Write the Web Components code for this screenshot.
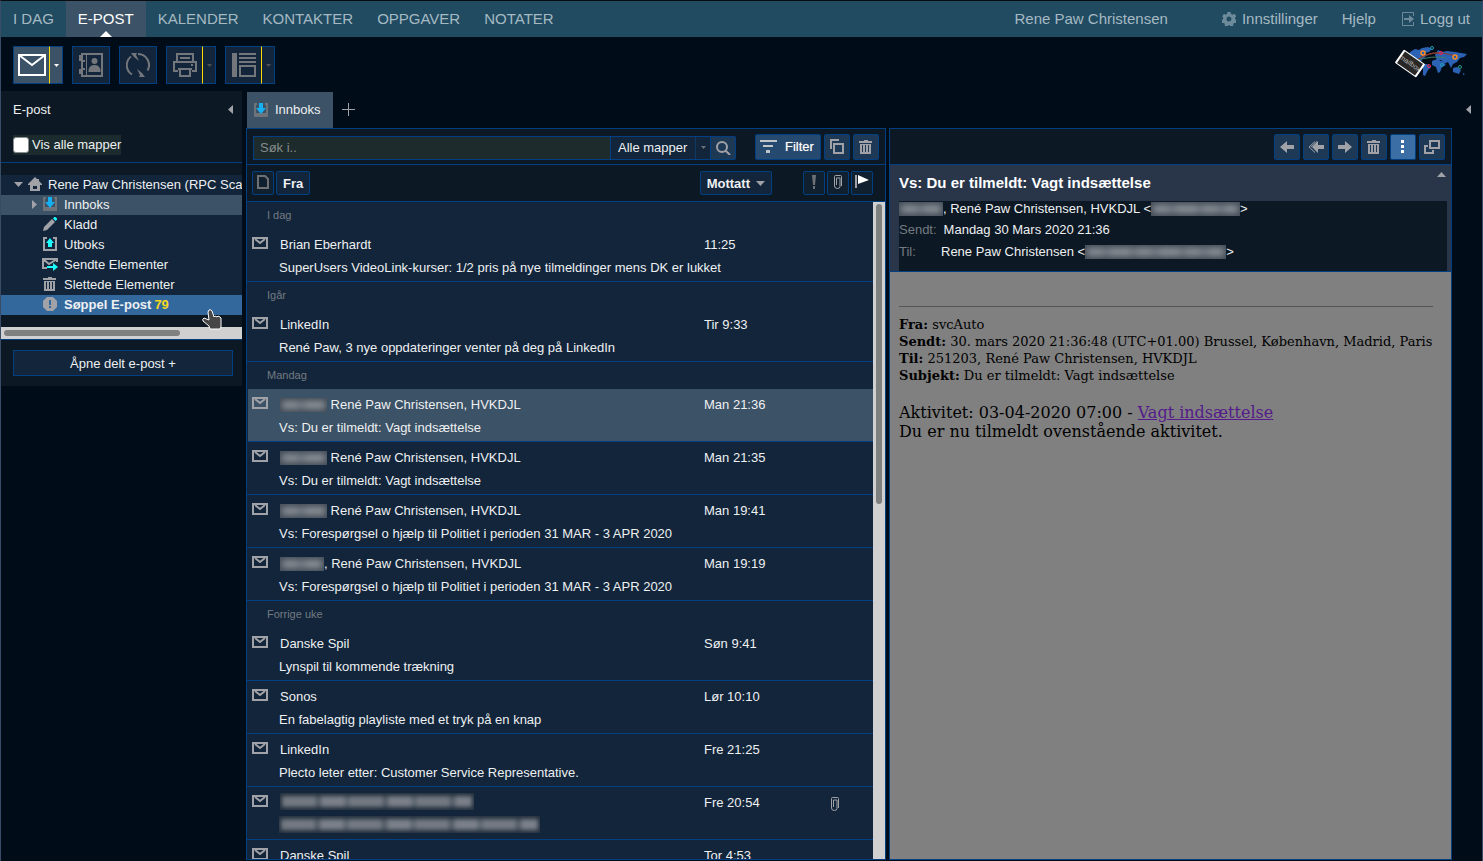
<!DOCTYPE html>
<html lang="nb">
<head>
<meta charset="utf-8">
<title>E-post – Innboks</title>
<style>
html, body { margin: 0; height: 100%; }
body {
  --line: #003f82; --panel: #0c1823; --row: #12253a; --sel: #3c5266; --btn: #1e3956;
  --ink: #eef0f2; --muted: #747b82; --icon: #a0a2a7;
  background: #000c18; color: var(--ink); overflow: hidden;
  font: 13px/20px "Liberation Sans", Arial, sans-serif;
}
</style>
</head>
<body>
<mail-app></mail-app>

<script>
const BASE = `
  *, *::before, *::after { box-sizing: border-box; }
  button, input, select { font: inherit; color: inherit; margin: 0; padding: 0; border: 0; background: none; border-radius: 0; outline: 0; }
  a { color: inherit; text-decoration: none; }
`;
function define(name, css, html) {
  const tpl = document.createElement('template');
  customElements.define(name, class extends HTMLElement {
    constructor() {
      super();
      this.attachShadow({ mode: 'open' });
    }
    connectedCallback() {
      if (this.shadowRoot.childNodes.length) return;
      tpl.innerHTML = `<style>${BASE}${css}</style>` + (typeof html === 'function' ? html(this) : html);
      this.shadowRoot.append(tpl.content.cloneNode(true));
    }
  });
}

/* Each icon: [width, height, markup]; shapes use currentColor. */
const S = (w, d, extra = '') => `<path fill="none" stroke="currentColor" stroke-width="${w}" d="${d}" ${extra}/>`;
const F = (d, extra = '') => `<path fill="currentColor" d="${d}" ${extra}/>`;
const ICONS = {
  compose: [28, 22, S(2, 'M1 1h26v20H1z M1 1l13 10L27 1')],
  contacts: [24, 24, F('M2 0h4v2H4v5h2v2H4v6h2v2H4v5h2v2H2v-3H0v-5h2V8H0V2h2z') +
    S(2, 'M6 1h17v22H6') + S(1, 'M7.500 1v22') + F('M15.500 5a3 3 0 1 1 0 6 3 3 0 0 1 0-6z M9.500 19v-2q1-5 6-5t6 5v2z')],
  sync: [24, 24, S(2, 'M6 21.500A11 11 0 0 1 5 3.500 M12 1A11 11 0 0 1 21.500 17.500') + F('M5 0h6l-1 2 3 6-5-4z M19 24h-6l1-2-3-6 5 4z')],
  print: [24, 24, S(2, 'M4 9V1h16v8 M5 18H1V9h22v9h-4 M7 17v6h10v-6') + F('M7 4h10v2H7z M5 15h14v2H5z M18 11h2v2h-2z')],
  layout: [24, 24, F('M0 0h5v24H0z M7 0h17v2H7z M7 4h17v2H7z M7 8h17v2H7z') + S(2, 'M8 13h15v10H8z')],
  caret: [5, 3, F('M0 0h5L2.500 3z')],
  down: [9, 5, F('M0 0h9L4.500 5z')],
  up: [9, 5, F('M0 5h9L4.500 0z')],
  right: [5, 9, F('M0 0v9l5-4.500z')],
  left: [5, 9, F('M5 0v9L0 4.500z')],
  plus: [13, 13, S(1, 'M6.500 0v13M0 6.500h13')],
  gear: [14, 14, F('M5.500 0h3l.5 2 1.500.700 1.800-1 2 2.500-1.300 1.600.2 1.400 1.800 1-.7 2.800-2.200-.1-1 1.100.3 2-2.600 1-1-1.800H6.200l-1 1.800-2.600-1 .3-2-1-1.100-1.900.1-.7-2.800 1.800-1 .1-1.400L.300 4.200l1.700-2.500 1.800 1L5 2z M7 4.500a2.500 2.500 0 1 0 0 5 2.500 2.500 0 0 0 0-5z', 'fill-rule="evenodd"')],
  logout: [12, 14, S(1, 'M11.500 4V.500H.500v13h11V10') + F('M2 6h5V3l5 4-5 4V8H2z')],
  inbox: [14, 14, `<path fill="#6d7379" d="M0 0h3v2H2v8h10V2h-1V0h3v14H0z"/><path fill="#16b0f2" d="M5 0h4v5h3l-5 6-5-6h3z"/>`],
  outbox: [14, 14, `<path fill="#a0a2a7" d="M0 0h4v2H2v10h10V2h-2V0h4v14H0z"/><path fill="#1cfbff" d="M5 10h4V6h2L7 1 3 6h2z"/>`],
  pencil: [14, 14, F('M0 14l1-4 8-8 3 3-8 8z') + `<path fill="#1cfbff" d="M10 1.500L11.500 0h1L14 1.500v1L12.500 4z"/>`],
  sent: [16, 13, S(2, 'M5 10H1V1h14v3 M1 1l6 5 8-5') + `<path fill="#1cfbff" d="M5 8h6V5l5 4-5 4v-3H5z"/>`],
  trash: [14, 14, F('M5 0h4v1h4v2H0V1h5z M1 4h11v10H1z M3 5v7h1V5z M6 5v7h1V5z M9 5v7h1V5z', 'fill-rule="evenodd"')],
  junk: [14, 14, F('M4 0h6l4 4v6l-4 4H4l-4-4V4z M6 3v5h2V3z M6 9v2h2V9z', 'fill-rule="evenodd"')],
  home: [14, 14, F('M7 0l2 2h2v2l3 3v1h-2v6H2V8H0V7z M5 9v3h4V9z', 'fill-rule="evenodd"')],
  mail: [16, 12, S(2, 'M1 1h14v10H1z') + S(2, 'M3 2l5 4 5-4')],
  file: [12, 14, S(2, 'M1 1h7l3 3v9H1z')],
  search: [15, 14, S(2, 'M6 1a5 5 0 1 1 0 10A5 5 0 0 1 6 1z M9.500 9.500L14 14')],
  filter: [17, 13, F('M0 0h17v2H0z M3 5h10v2H3z M6 10h4v3H6z')],
  copy: [14, 15, S(2, 'M9 1H1v9 M4 5h9v9H4z')],
  bang: [4, 14, F('M0 0h4l-1 10H1z M1 11h2v3H1z')],
  clip: [8, 14, S(1, 'M7.500 11V1.500q0-1-1-1h-5q-1 0-1 1V11q0 2.500 3 2.500 2.500 0 2.500-2V3H2.500v7')],
  flag: [14, 14, F('M0 0h2v13H0z') + `<path fill="#fff" d="M3 0l11 5-11 4z"/>`],
  back: [14, 12, F('M0 6l7-6v4h7v4H7v4z')],
  backall: [16, 12, F('M4 6l6-6v4h6v4h-6v4z') + S(1, 'M7 .500L1 6l6 5.500 M9 .500L3 6')],
  forward: [14, 12, F('M14 6L7 0v4H0v4h7v4z')],
  dots: [4, 14, `<path fill="#fff" d="M0 0h3v3H0zM0 5h3v3H0zM0 10h3v3H0z"/>`],
  popout: [16, 14, S(2, 'M6 1h9v7H6z M4 6H1v7h8v-3')],
};
define('ui-icon', `:host { display: inline-flex; flex: none; } svg { display: block; }`, el => {
  const [w, h, body] = ICONS[el.getAttribute('name')];
  return `<svg width="${w}" height="${h}" viewBox="0 0 ${w} ${h}" aria-hidden="true">${body}</svg>`;
});

/* A blurred-out piece of private text, sized with --w. */
define('private-text', `
  :host { display: inline-block; width: var(--w, 47px); height: 14px; vertical-align: -3px; overflow: hidden; background: #424c57; }
  i { display: block; height: 8px; margin: 3px 2px; filter: blur(3px);
      background: repeating-linear-gradient(90deg, #8a8f96 0 16px, #747b84 16px 23px, #8d9298 23px 44px, #6f7780 44px 49px); }
  :host([bare]) { background: #222f3d; height: 17px; }
  :host([bare]) i { height: 11px; filter: blur(2px); background: repeating-linear-gradient(90deg, #737982 0 34px, #4f5965 34px 39px, #7b8089 39px 63px, #57616d 63px 67px); }
`, `<i></i>`);

define('split-button', `
  :host { display: flex; color: #73777c; }
  button { display: flex; align-items: center; justify-content: center; height: 38px; width: 38px; background: var(--row); border: 1px solid var(--line); }
  .menu { display: none; border-left: 0; }
  :host([menu]) .main { border-right: 1px solid #ffd800; width: 37px; }
  :host([menu]) .menu { display: flex; width: 13px; color: #4e5154; }
  :host([primary]), :host([primary]) .menu { color: #fff; }
  :host([primary]) button { background-color: var(--sel); }
`, el => `<button class="main" aria-label="${el.getAttribute('label')}"><ui-icon name="${el.getAttribute('icon')}"></ui-icon></button>
<button class="menu" aria-label="${el.getAttribute('label')}, meny"><ui-icon name="caret"></ui-icon></button>`);

define('icon-button', `
  :host { display: block; color: var(--icon); }
  button { display: flex; align-items: center; justify-content: center; width: 26px; height: 26px; background: var(--btn); border: 1px solid var(--line); border-radius: 2px; }
  :host([small]) button { width: 22px; height: 24px; padding-bottom: 2px; background: #10202f; }
  :host([dim]) { color: #6d7176; }
  :host([active]) button { background: #3a6ea5; }
`, el => `<button aria-label="${el.getAttribute('label')}"><ui-icon name="${el.getAttribute('icon')}"></ui-icon></button>`);

define('top-bar', `
  :host { display: flex; justify-content: space-between; height: 36px; background: #204b61; color: #a6b9c3; font-size: 15px; line-height: 36px; }
  nav { display: flex; }
  a { padding: 0 12px; display: flex; align-items: center; gap: 6px; position: relative; white-space: nowrap; }
  a[aria-current] { background: var(--sel); color: #fff; }
  a[aria-current]::after { content: ""; position: absolute; left: 50%; bottom: 0; margin-left: -6px; border: 6px solid transparent; border-top: 0; border-bottom-color: #fff; }
  ui-icon { color: #6d8b9b; }
  .user { margin-right: 42px; }
  .out { padding-left: 14px; }
`, `<nav aria-label="Hovedmeny"><a href="#">I DAG</a><a href="#" aria-current="page">E-POST</a><a href="#">KALENDER</a><a href="#">KONTAKTER</a><a href="#">OPPGAVER</a><a href="#">NOTATER</a></nav>
<nav aria-label="Konto"><span class="user">Rene Paw Christensen</span><a href="#"><ui-icon name="gear"></ui-icon>Innstillinger</a><a href="#">Hjelp</a><a href="#" class="out"><ui-icon name="logout"></ui-icon>Logg ut</a></nav>`);

define('brand-logo', `:host { display: block; } svg { display: block; }
  text { font: 7px "Liberation Sans", sans-serif; }`, `
<svg width="74" height="34" viewBox="0 0 74 34" role="img" aria-label="mailbox">
  <g fill="#2b62b4">
    <path d="M16 6l5-3 4 1 3-2 6-1 4 2-3 3-4 1 2 2-3 3-2 1-1 4-4 1-8-7z"/>
    <path d="M29 18l4 0 4 3-3 3-3 6-2-1z"/>
    <path d="M41 9l3-5 4 2 5-1 8 1 12 2-3 3-4 1-3 4-4 2-2 4-3-6-4 2-3-4-4 0z"/>
    <path d="M38 15l5-2 6 3 3 3-4 2-2 5-2 1-2-6-4-2z"/>
    <path d="M59 22l4-1 4 3-2 4-6-2z M69 27l2 1-2 1z"/>
  </g>
  <path d="M21 15Q38 2 62 10M21 15q15-10 25-8" fill="none" stroke="#8b3b2d"/>
  <path d="M21 15Q38 9 52 12" fill="none" stroke="#3b7f62"/>
  <g fill="none" stroke-width="1">
    <circle cx="29" cy="7" r="2" stroke="#ff8b20" stroke-width="1.500"/><circle cx="61" cy="11" r="2" stroke="#ff8b20" stroke-width="1.500"/>
    <circle cx="47" cy="7" r="1.500" stroke="#f02858"/><circle cx="35" cy="20" r="1.500" stroke="#f02858"/>
    <circle cx="38" cy="2" r="1.500" stroke="#1f9fb6"/><circle cx="48" cy="19" r="1.500" stroke="#1f9fb6"/><circle cx="66" cy="21" r="1.500" stroke="#299b87"/>
  </g>
  <g transform="translate(16 17.500) rotate(35)">
    <rect x="-13" y="-8" width="26" height="16" rx="1" fill="#fff"/>
    <rect x="-11" y="-7" width="22" height="14" fill="#292726"/>
    <text x="0" y="2" text-anchor="middle" fill="#bbb">mailbox</text>
  </g>
</svg>`);

define('tool-bar', `
  :host { display: flex; align-items: flex-start; gap: 9px; height: 54px; padding: 9px 14px 0 12px; }
  brand-logo { margin-left: auto; }
`, `<split-button icon="compose" label="Ny e-post" menu primary></split-button><split-button icon="contacts" label="Kontakter"></split-button><split-button icon="sync" label="Oppdater"></split-button><split-button icon="print" label="Skriv ut" menu></split-button><split-button icon="layout" label="Visning" menu></split-button><brand-logo></brand-logo>`);

define('folder-row', `
  :host { display: block; }
  a { display: flex; align-items: center; height: 20px; padding-left: 42px; background: var(--row); white-space: nowrap; overflow: hidden; color: var(--icon); line-height: 22px; }
  :host([root]) a { padding-left: 13px; }
  :host([open]) a { padding-left: 31px; background: var(--sel); }
  :host([hot]) a { background: #33689d; font-weight: bold; }
  .toggle { margin-right: 4px; padding-bottom: 2px; }
  :host([open]) .toggle { margin-right: 6px; }
  .ico { width: 16px; height: 20px; padding-bottom: 2px; margin-right: 6px; margin-left: -1px; display: flex; align-items: center; justify-content: center; flex: none; }
  :host([root]) .ico { margin-left: 0; margin-right: 5px; }
  .name { color: var(--ink); }
  b { color: #f7d81e; margin-left: 3px; }
`, el => {
  const t = el.hasAttribute('root') ? 'down' : el.hasAttribute('open') ? 'right' : '';
  const c = el.getAttribute('count');
  return `<a href="#">${t ? `<ui-icon class="toggle" name="${t}"></ui-icon>` : ''}<span class="ico"><ui-icon name="${el.getAttribute('icon')}"></ui-icon></span><span class="name"><slot></slot></span>${c ? `<b>${c}</b>` : ''}</a>`;
});

define('folder-panel', `
  :host { display: block; position: relative; align-self: start; background: var(--panel); }
  header { display: flex; align-items: center; justify-content: space-between; height: 37px; padding: 0 9px 0 12px; color: var(--icon); }
  h2 { margin: 0; font: inherit; color: var(--ink); }
  .all { height: 35px; padding: 7px 12px; border-bottom: 1px solid var(--line); }
  label { display: inline-flex; align-items: center; gap: 3px; height: 20px; line-height: 22px; background: #1c2b2d; }
  input { appearance: none; width: 16px; height: 16px; background: #fff; border: 1px solid #8b8f92; border-radius: 3px; }
  .tree { margin: 12px 0; }
  .bar { height: 12px; background: #d0d0d0; padding: 3px; }
  .bar i { display: block; width: 75%; height: 6px; border-radius: 3px; background: #7e8080; }
  .foot { border-top: 1px solid var(--line); padding: 10px 9px 10px 12px; }
  .foot button { display: block; width: 100%; height: 26px; padding-top: 1px; background: var(--row); border: 1px solid var(--line); }
  .pointer { position: absolute; left: 201px; top: 218px; }
`, `<header><h2>E-post</h2><ui-icon name="left"></ui-icon></header>
<div class="all"><label><input type="checkbox">Vis alle mapper</label></div>
<div class="tree" role="group" aria-label="Mapper">
  <folder-row icon="home" root>Rene Paw Christensen (RPC Sca</folder-row>
  <folder-row icon="inbox" open>Innboks</folder-row>
  <folder-row icon="pencil">Kladd</folder-row>
  <folder-row icon="outbox">Utboks</folder-row>
  <folder-row icon="sent">Sendte Elementer</folder-row>
  <folder-row icon="trash">Slettede Elementer</folder-row>
  <folder-row icon="junk" hot count="79">Søppel E-post</folder-row>
</div>
<div class="bar"><i></i></div>
<div class="foot"><button>Åpne delt e-post +</button></div>
<svg class="pointer" width="20" height="21" viewBox="0 0 20 21" aria-hidden="true"><path d="M7 1q2-1 3 1l2 6 1-1 2 1 1-1 2 1 1 1v9l-1 2H8l-1-3-6-5q-1-2 1-3l5 2-1-8z" fill="#464646" stroke="#fff"/></svg>`);

define('mail-group', `
  :host { display: block; }
  h3 { margin: 0; height: 27px; padding-left: 20px; font-size: 11px; font-weight: normal; line-height: 27px; color: var(--muted); }
`, el => `<h3>${el.getAttribute('name')}</h3><slot></slot>`);

define('mail-row', `
  :host { display: grid; grid-template-columns: 27px minmax(0, 1fr) 127px 42px; align-content: start; height: 53px; padding: 4px 0 0 5px; border-bottom: 1px solid var(--line); line-height: 23px; white-space: nowrap; color: var(--ink); }
  :host([selected]) { background: var(--sel); margin-left: 1px; padding-left: 4px; }
  .ico, .clip { color: var(--icon); padding-top: 4px; height: 23px; }
  .from { padding-left: 1px; }
  .subject { grid-column: 2 / -1; }
`, el => `<ui-icon class="ico" name="mail"></ui-icon>
<span class="from"><slot></slot></span><time>${el.getAttribute('time')}</time>
<span class="clip">${el.hasAttribute('clip') ? '<ui-icon name="clip"></ui-icon>' : ''}</span>
<span class="subject"><slot name="subject">${el.getAttribute('subject') || ''}</slot></span>`);

define('mail-list', `
  :host { display: flex; flex-direction: column; min-height: 0; margin-left: 4px; }
  .tabs { display: flex; align-items: center; height: 37px; padding: 1px 0 0 1px; color: var(--icon); flex: none; }
  .tabs button { display: flex; align-items: center; }
  .tab { height: 36px; gap: 7px; padding: 0 12px 0 7px; background: var(--sel); }
  .tab span { color: var(--ink); }
  .new { padding: 8px 9px 10px; }
  .box { display: flex; flex-direction: column; flex: 1; min-height: 0; border: 1px solid var(--line); margin-bottom: 1px; background: var(--panel); }
  .find, .sort { display: flex; flex: none; align-items: center; height: 36px; border-bottom: 1px solid var(--line); }
  .find { gap: 3px; padding: 0 6px; }
  form { display: flex; flex: 1; height: 24px; margin: 2px 16px 0 0; }
  input { flex: 1; min-width: 0; padding: 0 6px; background: #1d2b2d; border: 1px solid var(--line); }
  input::placeholder { color: #858b8c; opacity: 1; }
  .where { position: relative; display: flex; }
  select { appearance: none; width: 100px; padding-left: 7px; background: var(--row); border: 1px solid var(--line); border-left: 0; }
  .where i { position: absolute; right: 0; top: 1px; bottom: 1px; width: 16px; border-left: 1px solid #0c3966; display: flex; align-items: center; justify-content: center; color: #6b7278; pointer-events: none; }
  .go { width: 25px; display: flex; align-items: center; justify-content: center; background: var(--btn); border: 1px solid var(--line); border-left: 0; border-radius: 0 2px 2px 0; color: var(--icon); }
  .filter { display: flex; align-items: center; gap: 8px; height: 26px; width: 66px; padding-left: 4px; background: #26496f; border: 1px solid var(--line); border-radius: 2px; }
  .filter span { color: #fff; text-shadow: 0 0 1px #aaa; }
  .filter ui-icon { color: #c0c5ca; }
  .sort { height: 37px; gap: 2px; padding: 0 12px 0 5px; }
  .key { height: 24px; padding: 1px 6px 0; border: 1px solid var(--line); border-radius: 2px; background: var(--row); font-weight: bold; display: flex; align-items: center; gap: 6px; }
  .when { margin-left: auto; margin-right: 29px; }
  .when ui-icon { color: var(--icon); }
  .list { display: flex; flex: 1; min-height: 0; overflow: hidden; background: var(--row); }
  .rows { flex: 1; min-width: 0; }
  .scroll { width: 12px; background: #d0d0d0; padding: 2px 3px; }
  .scroll i { display: block; height: 46%; border-radius: 3px; background: #7e8080; }
`, `<div class="tabs"><button class="tab"><ui-icon name="inbox"></ui-icon><span>Innboks</span></button><button class="new" aria-label="Ny fane"><ui-icon name="plus"></ui-icon></button></div>
<div class="box">
  <div class="find">
    <form><input type="search" aria-label="Søk" placeholder="Søk i.."><span class="where"><select aria-label="Søk i mappe"><option>Alle mapper</option></select><i><ui-icon name="caret"></ui-icon></i></span><button class="go" type="button" aria-label="Søk"><ui-icon name="search"></ui-icon></button></form>
    <button class="filter"><ui-icon name="filter"></ui-icon><span>Filter</span></button>
    <icon-button icon="copy" label="Kopier"></icon-button><icon-button icon="trash" label="Slett"></icon-button>
  </div>
  <div class="sort">
    <icon-button small dim icon="file" label="Type"></icon-button><button class="key">Fra</button>
    <button class="key when">Mottatt<ui-icon name="down"></ui-icon></button>
    <icon-button small dim icon="bang" label="Prioritet"></icon-button><icon-button small icon="clip" label="Vedlegg"></icon-button><icon-button small icon="flag" label="Flagg"></icon-button>
  </div>
  <div class="list"><div class="rows">
    <mail-group name="I dag"><mail-row time="11:25" subject="SuperUsers VideoLink-kurser: 1/2 pris på nye tilmeldinger mens DK er lukket">Brian Eberhardt</mail-row></mail-group>
    <mail-group name="Igår"><mail-row time="Tir 9:33" subject="René Paw, 3 nye oppdateringer venter på deg på LinkedIn">LinkedIn</mail-row></mail-group>
    <mail-group name="Mandag">
      <mail-row selected time="Man 21:36" subject="Vs: Du er tilmeldt: Vagt indsættelse"><private-text></private-text> René Paw Christensen, HVKDJL</mail-row>
      <mail-row time="Man 21:35" subject="Vs: Du er tilmeldt: Vagt indsættelse"><private-text></private-text> René Paw Christensen, HVKDJL</mail-row>
      <mail-row time="Man 19:41" subject="Vs: Forespørgsel o hjælp til Politiet i perioden 31 MAR - 3 APR 2020"><private-text></private-text> René Paw Christensen, HVKDJL</mail-row>
      <mail-row time="Man 19:19" subject="Vs: Forespørgsel o hjælp til Politiet i perioden 31 MAR - 3 APR 2020"><private-text style="--w:44px"></private-text>, René Paw Christensen, HVKDJL</mail-row>
    </mail-group>
    <mail-group name="Forrige uke">
      <mail-row time="Søn 9:41" subject="Lynspil til kommende trækning">Danske Spil</mail-row>
      <mail-row time="Lør 10:10" subject="En fabelagtig playliste med et tryk på en knap">Sonos</mail-row>
      <mail-row time="Fre 21:25" subject="Plecto leter etter: Customer Service Representative.">LinkedIn</mail-row>
      <mail-row time="Fre 20:54" clip><private-text bare style="--w:194px"></private-text><private-text slot="subject" bare style="--w:261px"></private-text></mail-row>
      <mail-row time="Tor 4:53">Danske Spil</mail-row>
    </mail-group>
  </div><div class="scroll"><i></i></div></div>
</div>`);

define('reading-pane', `
  :host { display: flex; flex-direction: column; min-height: 0; margin: 37px 0 1px 3px; border: 1px solid var(--line); background: #808080; }
  .actions { display: flex; justify-content: flex-end; align-items: center; gap: 3px; height: 36px; padding-right: 6px; background: var(--panel); border-bottom: 1px solid var(--line); flex: none; }
  header { flex: none; background: #29364a; padding: 0 4px 0 9px; border-bottom: 1px solid var(--line); }
  .title { display: flex; justify-content: space-between; height: 36px; color: var(--icon); }
  h1 { margin: 0; font-size: 15px; line-height: 36px; color: #fff; }
  .title ui-icon { padding: 7px 1px 0 0; }
  .meta { background: var(--panel); height: 70px; line-height: 22px; margin: 0; color: var(--ink); white-space: nowrap; display: grid; grid-template-columns: 42px 1fr; grid-template-rows: 18px 22px 22px; }
  .meta > :first-child { grid-column: 1 / -1; line-height: 16px; }
  dt { color: var(--muted); } dd { margin: 0; }
  .body { padding: 34px 18px 0 9px; font: 16px/19px "DejaVu Serif", serif; color: #000; }
  hr { margin: 0 0 9px; border: 0; border-top: 1px solid #555; }
  .quote { font-size: 13px; line-height: 17px; white-space: nowrap; }
  .text { margin-top: 19px; }
  .text a { color: #551a8b; text-decoration: underline; }
`, `<div class="actions"><icon-button icon="back" label="Svar"></icon-button><icon-button icon="backall" label="Svar alle"></icon-button><icon-button icon="forward" label="Videresend"></icon-button><icon-button icon="trash" label="Slett"></icon-button><icon-button icon="dots" label="Mer" active></icon-button><icon-button icon="popout" label="Åpne i vindu"></icon-button></div>
<header><div class="title"><h1>Vs: Du er tilmeldt: Vagt indsættelse</h1><ui-icon name="up"></ui-icon></div>
<dl class="meta"><dd><private-text style="--w:44px"></private-text>, René Paw Christensen, HVKDJL &lt;<private-text style="--w:89px"></private-text>&gt;</dd>
<dt>Sendt:</dt><dd>&thinsp;Mandag 30 Mars 2020 21:36</dd><dt>Til:</dt><dd>Rene Paw Christensen &lt;<private-text style="--w:141px"></private-text>&gt;</dd></dl></header>
<div class="body"><hr>
<div class="quote"><b>Fra:</b> svcAuto<br><b>Sendt:</b> 30. mars 2020 21:36:48 (UTC+01.00) Brussel, København, Madrid, Paris<br><b>Til:</b> 251203, René Paw Christensen, HVKDJL<br><b>Subjekt:</b> Du er tilmeldt: Vagt indsættelse</div>
<div class="text">Aktivitet: 03-04-2020 07:00 - <a href="#">Vagt indsættelse</a><br>Du er nu tilmeldt ovenstående aktivitet.</div></div>`);

define('mail-app', `
  :host { display: flex; flex-direction: column; box-sizing: border-box; height: 100vh; border: 1px solid #3a4b66; border-top-color: #0a0d10; border-bottom: 0; }
  main { flex: 1; min-height: 0; display: grid; grid-template: minmax(0, 1fr) / 241px minmax(0, 644fr) minmax(0, 566fr) 30px; }
  aside { display: flex; justify-content: flex-end; align-items: flex-start; padding: 14px 11px 0 0; color: var(--icon); }
`, `<top-bar></top-bar><tool-bar></tool-bar><main><folder-panel></folder-panel><mail-list></mail-list><reading-pane></reading-pane><aside><ui-icon name="left"></ui-icon></aside></main>`);
</script>
</body>
</html>
